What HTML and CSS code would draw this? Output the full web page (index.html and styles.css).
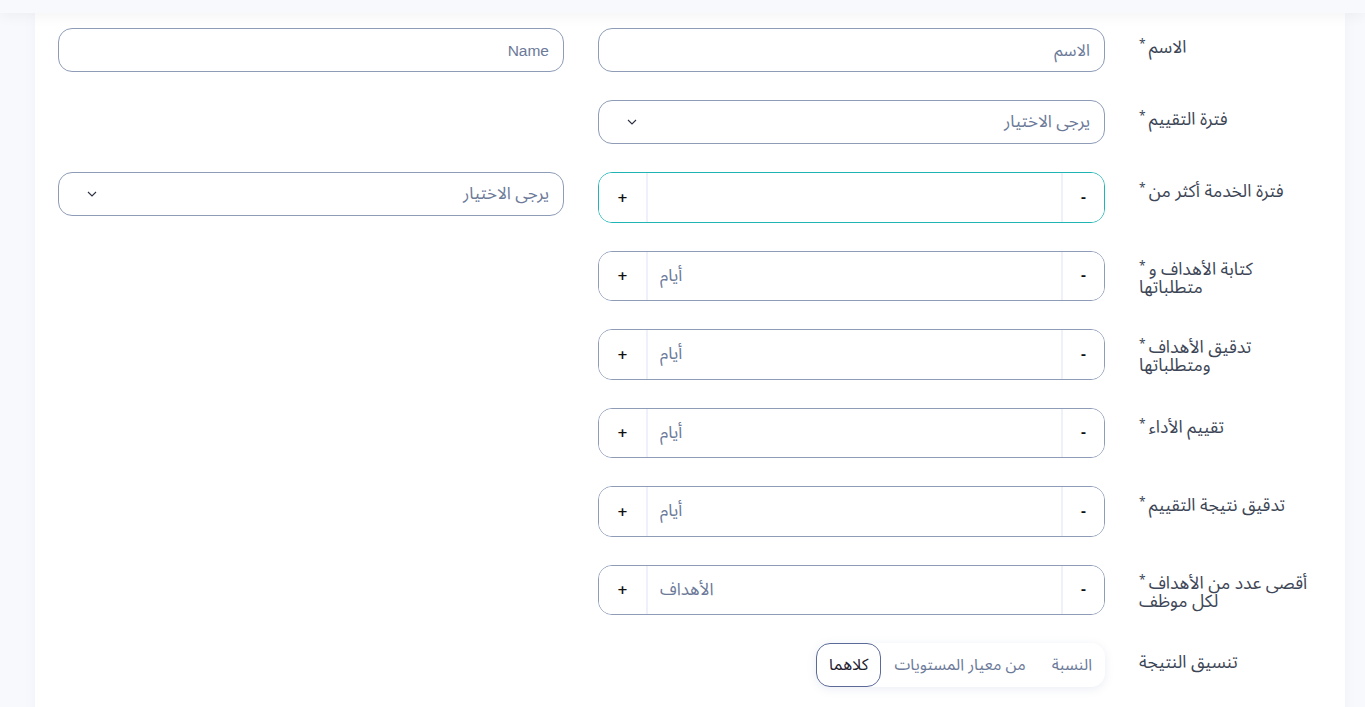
FILE: index.html
```html
<!DOCTYPE html>
<html lang="ar" dir="rtl">
<head>
<meta charset="utf-8">
<title>نموذج التقييم</title>
<link rel="stylesheet" href="styles.css">
</head>
<body>
<div class="topbar"></div>
<main class="page">
  <section class="card">
    <form class="form-grid">
      <label class="label">الاسم<span class="req">*</span></label>
      <input class="field" type="text" placeholder="الاسم">
      <input class="field ltr" type="text" placeholder="Name">

      <label class="label">فترة التقييم<span class="req">*</span></label>
      <div class="select"><span class="select-text">يرجى الاختيار</span><svg class="chev" viewBox="0 0 10 6" width="10" height="6"><path d="M1 1l4 4 4-4" fill="none" stroke="#2b3140" stroke-width="1.1"/></svg></div>
      <div class="empty"></div>

      <label class="label">فترة الخدمة أكثر من<span class="req">*</span></label>
      <div class="stepper focused"><button type="button" class="step minus">-</button><input class="step-input" type="text" placeholder=""><button type="button" class="step plus">+</button></div>
      <div class="select"><span class="select-text">يرجى الاختيار</span><svg class="chev" viewBox="0 0 10 6" width="10" height="6"><path d="M1 1l4 4 4-4" fill="none" stroke="#2b3140" stroke-width="1.1"/></svg></div>

      <label class="label"><span class="line">كتابة الأهداف و<span class="req">*</span></span><span class="line">متطلباتها</span></label>
      <div class="stepper"><button type="button" class="step minus">-</button><input class="step-input" type="text" placeholder="أيام"><button type="button" class="step plus">+</button></div>
      <div class="empty"></div>

      <label class="label"><span class="line">تدقيق الأهداف<span class="req">*</span></span><span class="line">ومتطلباتها</span></label>
      <div class="stepper"><button type="button" class="step minus">-</button><input class="step-input" type="text" placeholder="أيام"><button type="button" class="step plus">+</button></div>
      <div class="empty"></div>

      <label class="label">تقييم الأداء<span class="req">*</span></label>
      <div class="stepper"><button type="button" class="step minus">-</button><input class="step-input" type="text" placeholder="أيام"><button type="button" class="step plus">+</button></div>
      <div class="empty"></div>

      <label class="label">تدقيق نتيجة التقييم<span class="req">*</span></label>
      <div class="stepper"><button type="button" class="step minus">-</button><input class="step-input" type="text" placeholder="أيام"><button type="button" class="step plus">+</button></div>
      <div class="empty"></div>

      <label class="label"><span class="line">أقصى عدد من الأهداف<span class="req">*</span></span><span class="line">لكل موظف</span></label>
      <div class="stepper"><button type="button" class="step minus">-</button><input class="step-input" type="text" placeholder="الأهداف"><button type="button" class="step plus">+</button></div>
      <div class="empty"></div>

      <label class="label">تنسيق النتيجة</label>
      <div class="seg-wrap">
        <div class="segmented">
          <span class="seg">النسبة</span>
          <span class="seg">من معيار المستويات</span>
          <span class="seg active">كلاهما</span>
        </div>
      </div>
      <div class="empty"></div>
    </form>
  </section>
</main>
</body>
</html>
```
FILE: styles.css
```css
* { box-sizing: border-box; }
html, body { margin: 0; padding: 0; }
body {
  background: #f8f9fd;
  font-family: "Noto Sans Arabic", "DejaVu Sans", "Noto Sans", sans-serif;
  color: #3d4656;
  height: 707px;
  overflow: hidden;
}
.topbar {
  height: 13px;
  background: #f8f9fd;
  position: relative;
  z-index: 2;
  box-shadow: 0 3px 14px rgba(0, 0, 0, 0.05);
}
.page {
  padding: 0 20px 0 35px;
}
.card {
  background: #fff;
  min-height: 720px;
  padding: 15px 23px 40px;
  box-shadow: 0 0 12px rgba(120, 130, 170, 0.06);
}
.form-grid {
  display: grid;
  grid-template-columns: 183px 507px 506px;
  column-gap: 34px;
  row-gap: 28px;
  align-items: start;
}
.label {
  text-align: left;
  font-size: 17.5px;
  line-height: 19px;
  padding-top: 10px;
  color: #3d4656;
}
.line {
  display: block;
  line-height: 18px;
}
.req {
  font-size: 12px;
  line-height: 0;
  vertical-align: 5px;
  margin-right: 3px;
  color: #3d4656;
}
.field {
  height: 44px;
  width: 100%;
  border: 1px solid #8e9cb8;
  border-radius: 14px;
  padding: 0 14px;
  font-family: inherit;
  font-size: 16.5px;
  color: #3d4656;
  background: #fff;
  outline: none;
}
.field::placeholder { color: #6c7a99; }
.field.ltr { font-family: "Liberation Sans", Arial, sans-serif; font-size: 15.5px; padding-top: 2px; }
.select {
  height: 44px;
  border: 1px solid #8e9cb8;
  border-radius: 14px;
  padding: 0 14px 0 28px;
  display: flex;
  align-items: center;
  justify-content: space-between;
  background: #fff;
}
.select-text {
  font-size: 17px;
  color: #6c7a99;
}
.chev { display: block; }
.stepper {
  height: 50.5px;
  border: 1px solid #8e9cb8;
  border-radius: 14px;
  display: flex;
  overflow: hidden;
  background: #fff;
}
.stepper.focused { border-color: #1fb5b5; }
.step {
  border: 0;
  background: #fff;
  font-family: "DejaVu Sans", sans-serif;
  font-weight: bold;
  font-size: 13px;
  color: #111;
  padding: 0;
  flex: none;
}
.step.minus {
  width: 43px;
  border-left: 2px solid #eef1f9;
}
.step.plus {
  width: 49px;
  border-right: 2px solid #eef1f9;
}
.step-input {
  flex: 1;
  min-width: 0;
  border: 0;
  outline: none;
  text-align: left;
  padding: 0 12px;
  font-family: inherit;
  font-size: 17px;
  color: #3d4656;
  background: #fff;
}
.step-input::placeholder { color: #6c7a99; }
.seg-wrap {
  display: flex;
  justify-content: flex-start;
}
.segmented {
  display: flex;
  height: 44px;
  border-radius: 14px;
  background: #fff;
  box-shadow: 0 2px 10px rgba(110, 125, 180, 0.14);
}
.seg {
  display: flex;
  align-items: center;
  padding: 0 12px;
  font-size: 16px;
  color: #6c7a99;
  border: 1px solid transparent;
  border-radius: 14px;
}
.seg.active {
  border-color: #5b6a98;
  color: #1e2230;
}
.empty { min-height: 1px; }
```
